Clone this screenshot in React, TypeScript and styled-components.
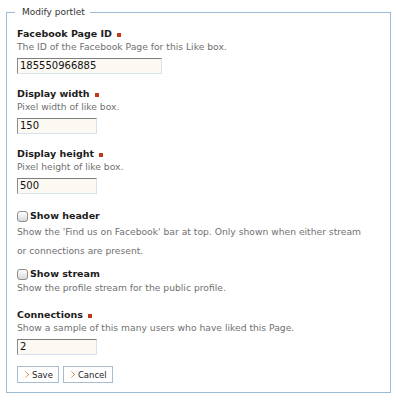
import * as React from "react";
import styled, { createGlobalStyle } from "styled-components";

const GlobalStyle = createGlobalStyle`
  html, body {
    margin: 0;
    padding: 0;
    background: #ffffff;
  }
  body {
    font-family: "DejaVu Sans", "Liberation Sans", sans-serif;
    color: #222222;
  }
`;

const Page = styled.div`
  width: 396px;
  height: 400px;
  padding: 6px 0 0 6px;
  box-sizing: border-box;
`;

const Fieldset = styled.fieldset`
  box-sizing: border-box;
  width: 385px;
  height: 387px;
  margin: 0;
  padding: 8px 10px 0 10px;
  border: 1px solid #9dbbd4;
`;

const Legend = styled.legend`
  margin-left: -2px;
  padding: 0 5px 0 7px;
  font-size: 9px;
  line-height: 12px;
  color: #333333;
`;

const Field = styled.div<{ $gap: number }>`
  margin-top: ${(p) => p.$gap}px;
`;

const Label = styled.div`
  display: flex;
  align-items: center;
  height: 14px;
  font-size: 9.5px;
  font-weight: bold;
  color: #1c1c1c;
`;

const Required = styled.span`
  width: 4px;
  height: 4px;
  margin-left: 5px;
  margin-top: 4px;
  background: #c0391c;
`;

const CheckRow = styled.label`
  display: flex;
  align-items: center;
  gap: 2px;
  height: 16px;
  font-size: 9.5px;
  font-weight: bold;
  color: #1c1c1c;
`;

const CheckBox = styled.span`
  box-sizing: border-box;
  width: 11px;
  height: 11px;
  margin-top: 2px;
  border: 1px solid #8d8d8d;
  border-radius: 3px;
  background: linear-gradient(#ffffff, #d9d9d9);
`;

const Help = styled.div<{ $tall?: boolean }>`
  font-size: 9.2px;
  line-height: ${(p) => (p.$tall ? 19 : 14)}px;
  margin-top: ${(p) => (p.$tall ? -1 : 0)}px;
  color: #707070;
`;

const Input = styled.div<{ $width: number }>`
  box-sizing: border-box;
  width: ${(p) => p.$width}px;
  height: 16px;
  margin-top: 4px;
  padding-left: 2px;
  font-size: 10px;
  line-height: 14px;
  color: #111111;
  background: #fcf9f3;
  border-style: solid;
  border-width: 1px;
  border-color: #7f7f7f #d6e3ee #d6e3ee #8c8c8c;
`;

const Buttons = styled.div`
  display: flex;
  gap: 4px;
  margin-top: 11px;
`;

const Button = styled.button`
  display: flex;
  align-items: center;
  gap: 2px;
  box-sizing: border-box;
  height: 17px;
  padding: 0 5px 0 7px;
  font-family: "DejaVu Sans", sans-serif;
  font-size: 8.5px;
  color: #1c1c1c;
  background: #ffffff;
  border: 1px solid #a9bccf;
  border-radius: 0;
  cursor: pointer;
`;

const Arrow = () => (
  <svg width="5" height="7" viewBox="0 0 5 7" shapeRendering="crispEdges">
    <rect x="0" y="0" width="1" height="1" fill="#f5b98a" />
    <rect x="1" y="1" width="1" height="1" fill="#ee9c5c" />
    <rect x="2" y="2" width="1" height="1" fill="#e8843a" />
    <rect x="3" y="3" width="1" height="1" fill="#e57a2c" />
    <rect x="2" y="4" width="1" height="1" fill="#e8843a" />
    <rect x="1" y="5" width="1" height="1" fill="#ee9c5c" />
    <rect x="0" y="6" width="1" height="1" fill="#f5b98a" />
  </svg>
);

export default function App() {
  return (
    <>
      <GlobalStyle />
      <Page>
        <Fieldset>
          <Legend>Modify portlet</Legend>
          <Field $gap={0}>
            <Label>
              Facebook Page ID<Required />
            </Label>
            <Help>The ID of the Facebook Page for this Like box.</Help>
            <Input $width={145}>185550966885</Input>
          </Field>
          <Field $gap={12}>
            <Label>
              Display width<Required />
            </Label>
            <Help>Pixel width of like box.</Help>
            <Input $width={80}>150</Input>
          </Field>
          <Field $gap={12}>
            <Label>
              Display height<Required />
            </Label>
            <Help>Pixel height of like box.</Help>
            <Input $width={80}>500</Input>
          </Field>
          <Field $gap={13}>
            <CheckRow>
              <CheckBox />
              Show header
            </CheckRow>
            <Help $tall>
              Show the 'Find us on Facebook' bar at top. Only shown when either stream
              <br />
              or connections are present.
            </Help>
          </Field>
          <Field $gap={5}>
            <CheckRow>
              <CheckBox />
              Show stream
            </CheckRow>
            <Help>Show the profile stream for the public profile.</Help>
          </Field>
          <Field $gap={12}>
            <Label>
              Connections<Required />
            </Label>
            <Help>Show a sample of this many users who have liked this Page.</Help>
            <Input $width={80}>2</Input>
          </Field>
          <Buttons>
            <Button>
              <Arrow />
              Save
            </Button>
            <Button>
              <Arrow />
              Cancel
            </Button>
          </Buttons>
        </Fieldset>
      </Page>
    </>
  );
}
